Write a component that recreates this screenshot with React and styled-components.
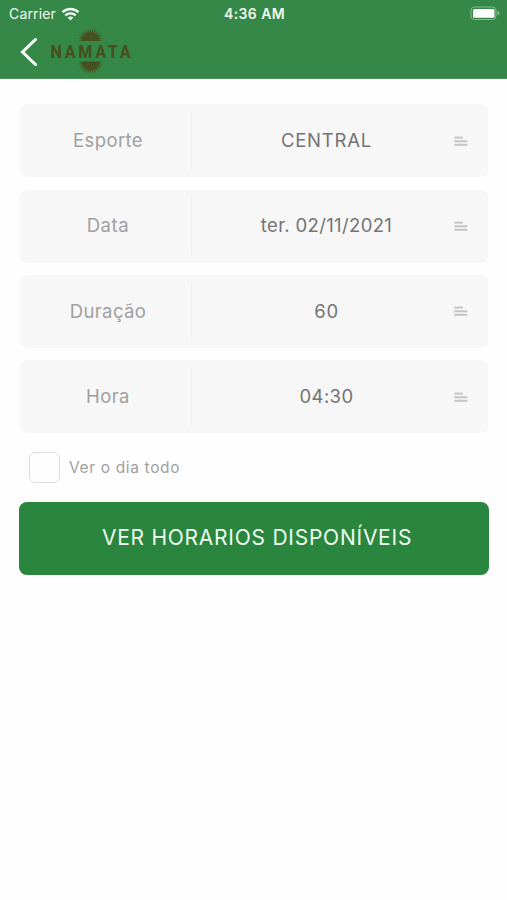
import React from "react";
import styled, { createGlobalStyle } from "styled-components";

const GlobalStyle = createGlobalStyle`
	* {
		box-sizing: border-box;
	}
	body {
		margin: 0;
		background: #fefefe;
		font-family: Inter, "Liberation Sans", sans-serif;
	}
`;

const Screen = styled.div`
	min-height: 900px;
	background: #fefefe;
`;

const Header = styled.header`
	height: 79px;
	background: #368848;
	border-bottom: 1px solid #479257;
`;

const StatusBar = styled.div`
	display: grid;
	grid-template-columns: 1fr auto 1fr;
	align-items: center;
	height: 27px;
	padding: 0 7px 0 9px;
	color: #f0faf0;
	font-size: 14px;
	line-height: 27px;
`;

const Carrier = styled.div`
	display: flex;
	align-items: center;
	gap: 5px;
	letter-spacing: 0.15px;
`;

const Clock = styled.div`
	font-weight: 600;
	font-size: 14px;
	letter-spacing: 0.4px;
`;

const BatteryIcon = styled.svg`
	display: block;
	justify-self: end;
`;

const NavBar = styled.nav`
	display: flex;
	align-items: center;
	height: 50px;
	padding-left: 20px;
`;

const BackButton = styled.button`
	display: flex;
	width: 31px;
	padding: 0;
	border: none;
	background: none;
	cursor: pointer;
`;

const Content = styled.main`
	padding: 25.15px 19px 0 20px;
`;

const Fields = styled.div`
	display: flex;
	flex-direction: column;
	gap: 12.4px;
`;

const Field = styled.div`
	display: flex;
	align-items: center;
	height: 73px;
	padding-right: 20px;
	border-radius: 7px;
	background: #f7f7f7;
	font-size: 18.5px;
	line-height: 24px;
`;

const FieldLabel = styled.div`
	display: flex;
	align-items: center;
	justify-content: center;
	width: 172px;
	height: 58px;
	padding: 0 0 1.6px 5px;
	border-right: 1px solid #eeeeee;
	color: #a0a0a0;
	letter-spacing: ${props => props.$spacing || "0"};
`;

const FieldValue = styled.div`
	flex: 1;
	padding: 0 0 1.6px 7px;
	text-align: center;
	color: #747474;
	letter-spacing: ${props => props.$spacing || "0"};
`;

const MenuIcon = styled.svg`
	display: block;
	margin-top: 1px;
`;

const CheckRow = styled.label`
	display: flex;
	align-items: center;
	gap: 9px;
	margin: 18.7px 0 18.8px 9px;
	height: 31px;
	color: #a0a0a0;
	font-size: 15.5px;
	letter-spacing: 0.65px;
`;

const CheckBox = styled.span`
	width: 31px;
	height: 31px;
	border: 1px solid #dedede;
	border-radius: 6px;
	background: #fefefe;
`;

const SubmitButton = styled.button`
	display: block;
	width: 470px;
	height: 73px;
	margin-left: -1px;
	padding: 0 0 1px 6px;
	border: none;
	border-radius: 8px;
	background: #2a863e;
	color: #effaf0;
	font-family: inherit;
	font-size: 21px;
	letter-spacing: 0.75px;
	cursor: pointer;
`;

const fields = [
	{ label: "Esporte", value: "CENTRAL", labelSpacing: "0.4px", valueSpacing: "0.8px" },
	{ label: "Data", value: "ter. 02/11/2021", labelSpacing: "0.6px", valueSpacing: "0.35px" },
	{ label: "Duração", value: "60", labelSpacing: "0.4px", valueSpacing: "0.8px" },
	{ label: "Hora", value: "04:30", labelSpacing: "0.4px", valueSpacing: "0.4px" }
];

// rays of the half sun, fanned out from the middle of its flat side
const sunPoints = Array.from({ length: 29 }, (_, i) => {
	const angle = Math.PI + (Math.PI * i) / 28;
	const radius = i % 2 ? 8 : 13;
	const x = 39.5 + Math.cos(angle) * radius;
	const y = 13 + Math.sin(angle) * radius;
	return `${x.toFixed(2)},${y.toFixed(2)}`;
}).join(" ");

const Wifi = () => (
	<svg width="19" height="14" viewBox="0 0 18 14" fill="none" stroke="#f5fff5">
		<path d="M1 5.2C5.5.8 12.5.8 17 5.2" strokeWidth="2.5" />
		<path d="M3.8 8.4C6.7 5.6 11.3 5.6 14.2 8.4" strokeWidth="2.3" />
		<path d="M6.2 10.6Q9 8.2 11.8 10.6L9 13.5Z" fill="#f5fff5" stroke="none" />
	</svg>
);

const Battery = () => (
	<BatteryIcon width="30" height="15" viewBox="0 0 30 15">
		<rect x="1" y="1" width="25" height="12.5" rx="3.5" fill="none" stroke="#85b98d" />
		<rect x="3" y="3" width="21.5" height="8.8" rx="1.5" fill="#ffffff" />
		<path d="M27.5 5Q29.5 5.5 29.5 7T27.5 9.5Z" fill="#85b98d" />
	</BatteryIcon>
);

const Logo = () => (
	<svg width="80" height="48" viewBox="0 0 80 48" fill="#46511f">
		<polygon points={sunPoints} />
		<text
			transform="translate(-0.5 30.3) scale(0.87 1)"
			fontFamily="Roboto, sans-serif"
			fontSize="18.5"
			fontWeight="800"
			textLength="92"
			lengthAdjust="spacing"
		>
			NAMATA
		</text>
		<polygon points={sunPoints} transform="translate(0 46.5) scale(1 -1)" />
	</svg>
);

const Menu = () => (
	<MenuIcon width="14" height="11" viewBox="0 0 14 11" fill="#c4c4c4">
		<rect x="0.3" y="0.6" width="8.4" height="2" />
		<rect x="0.3" y="4.3" width="13" height="2" />
		<rect x="0.3" y="7.8" width="13" height="2" />
	</MenuIcon>
);

export default function App() {
	return (
		<Screen>
			<GlobalStyle />
			<Header>
				<StatusBar>
					<Carrier>
						Carrier
						<Wifi />
					</Carrier>
					<Clock>4:36 AM</Clock>
					<Battery />
				</StatusBar>
				<NavBar>
					<BackButton aria-label="Voltar">
						<svg width="18" height="30" viewBox="0 0 18 30" fill="none" stroke="#ffffff" strokeWidth="3">
							<path d="M15.5 2.5L2.5 15L15.5 27.5" strokeLinecap="round" />
						</svg>
					</BackButton>
					<Logo />
				</NavBar>
			</Header>
			<Content>
				<Fields>
					{fields.map(field => (
						<Field key={field.label}>
							<FieldLabel $spacing={field.labelSpacing}>{field.label}</FieldLabel>
							<FieldValue $spacing={field.valueSpacing}>{field.value}</FieldValue>
							<Menu />
						</Field>
					))}
				</Fields>
				<CheckRow>
					<CheckBox />
					Ver o dia todo
				</CheckRow>
				<SubmitButton>VER HORARIOS DISPONÍVEIS</SubmitButton>
			</Content>
		</Screen>
	);
}
